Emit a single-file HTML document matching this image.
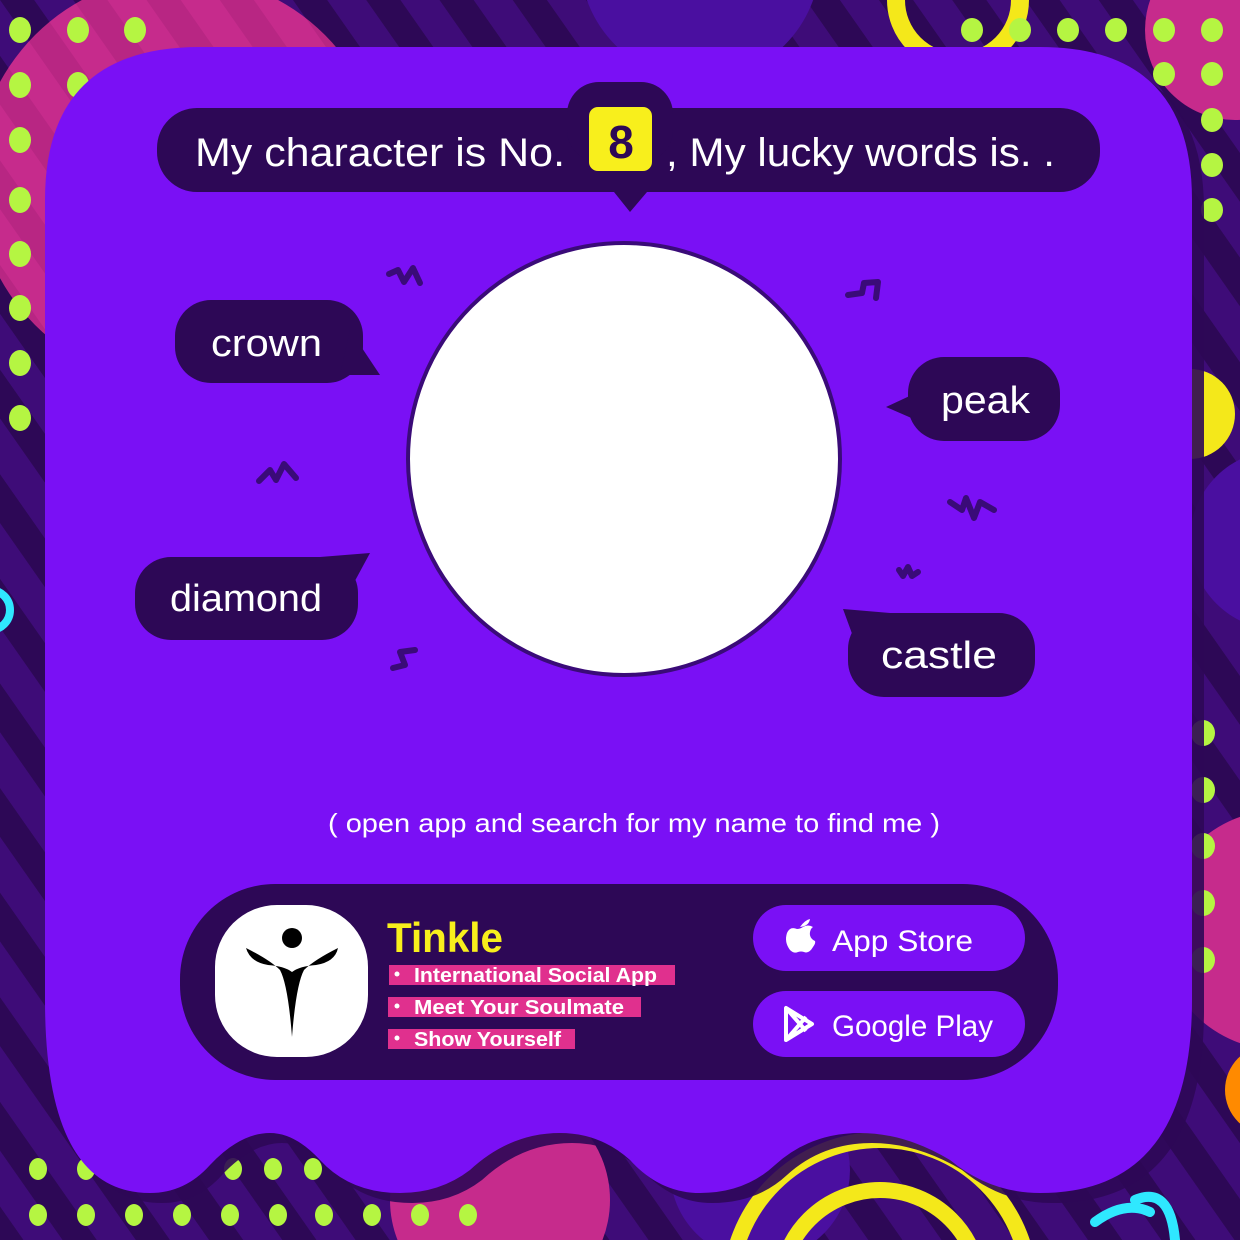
<!DOCTYPE html>
<html><head><meta charset="utf-8"><style>
html,body{margin:0;padding:0;width:1240px;height:1240px;overflow:hidden;background:#3e0c78}
svg{display:block;overflow:hidden}
text{font-family:"Liberation Sans",sans-serif}
</style></head><body>
<svg width="1240" height="1240" viewBox="0 0 1240 1240" xmlns="http://www.w3.org/2000/svg">
<defs>
<pattern id="st" width="60" height="60" patternUnits="userSpaceOnUse" patternTransform="rotate(-35)">
<rect width="60" height="60" fill="#3e0c78"/><rect width="28" height="60" fill="#2d0856"/>
</pattern>
<pattern id="stp" width="60" height="60" patternUnits="userSpaceOnUse" patternTransform="rotate(-35)">
<rect width="60" height="60" fill="#c62b8c"/><rect width="28" height="60" fill="#b82683"/>
</pattern>
</defs>
<rect width="1240" height="1240" fill="url(#st)"/>
<circle cx="700" cy="-40" r="120" fill="#4a0fa0"/>
<circle cx="180" cy="180" r="205" fill="url(#stp)"/>
<circle cx="1235" cy="30" r="90" fill="#c62b8c"/>
<circle cx="1280" cy="930" r="120" fill="#c62b8c"/>
<circle cx="1280" cy="540" r="90" fill="#4a0fa0"/>
<circle cx="1190" cy="414" r="45" fill="#f4e81a"/>
<circle cx="1270" cy="1090" r="45" fill="#ff8a00"/>
<circle cx="958" cy="0" r="62" fill="none" stroke="#f4e81a" stroke-width="18"/>
<circle cx="-10" cy="610" r="20" fill="none" stroke="#2fe8ff" stroke-width="8"/>
<circle cx="500" cy="1200" r="110" fill="#c62b8c"/>
<circle cx="760" cy="1170" r="90" fill="#4a0fa0"/>
<circle cx="880" cy="1290" r="150" fill="none" stroke="#f4e81a" stroke-width="16"/>
<circle cx="880" cy="1290" r="100" fill="none" stroke="#f4e81a" stroke-width="16"/>
<path d="M1095 1222 Q1125 1200 1150 1212" fill="none" stroke="#2fe8ff" stroke-width="10" stroke-linecap="round"/>
<path d="M1135 1200 Q1170 1185 1175 1240" fill="none" stroke="#2fe8ff" stroke-width="10" stroke-linecap="round"/>
<g fill="#b5f542">
<ellipse cx="20" cy="30" rx="11" ry="13"/><ellipse cx="78" cy="30" rx="11" ry="13"/><ellipse cx="135" cy="30" rx="11" ry="13"/>
<ellipse cx="20" cy="85" rx="11" ry="13"/><ellipse cx="78" cy="85" rx="11" ry="13"/>
<ellipse cx="20" cy="140" rx="11" ry="13"/><ellipse cx="20" cy="200" rx="11" ry="13"/><ellipse cx="20" cy="254" rx="11" ry="13"/><ellipse cx="20" cy="308" rx="11" ry="13"/><ellipse cx="20" cy="363" rx="11" ry="13"/><ellipse cx="20" cy="418" rx="11" ry="13"/>
<ellipse cx="972" cy="30" rx="11" ry="12"/><ellipse cx="1020" cy="30" rx="11" ry="12"/><ellipse cx="1068" cy="30" rx="11" ry="12"/><ellipse cx="1116" cy="30" rx="11" ry="12"/><ellipse cx="1164" cy="30" rx="11" ry="12"/><ellipse cx="1212" cy="30" rx="11" ry="12"/>
<ellipse cx="1164" cy="74" rx="11" ry="12"/><ellipse cx="1212" cy="74" rx="11" ry="12"/><ellipse cx="1212" cy="120" rx="11" ry="12"/><ellipse cx="1212" cy="165" rx="11" ry="12"/><ellipse cx="1212" cy="210" rx="11" ry="12"/>
<ellipse cx="1203" cy="733" rx="12" ry="13"/><ellipse cx="1203" cy="790" rx="12" ry="13"/><ellipse cx="1203" cy="846" rx="12" ry="13"/><ellipse cx="1203" cy="903" rx="12" ry="13"/><ellipse cx="1203" cy="960" rx="12" ry="13"/>
<ellipse cx="38" cy="1169" rx="9" ry="11"/><ellipse cx="86" cy="1169" rx="9" ry="11"/><ellipse cx="134" cy="1169" rx="9" ry="11"/><ellipse cx="233" cy="1169" rx="9" ry="11"/><ellipse cx="273" cy="1169" rx="9" ry="11"/><ellipse cx="313" cy="1169" rx="9" ry="11"/><ellipse cx="353" cy="1169" rx="9" ry="11"/>
<ellipse cx="38" cy="1215" rx="9" ry="11"/><ellipse cx="86" cy="1215" rx="9" ry="11"/><ellipse cx="134" cy="1215" rx="9" ry="11"/><ellipse cx="182" cy="1215" rx="9" ry="11"/><ellipse cx="230" cy="1215" rx="9" ry="11"/><ellipse cx="278" cy="1215" rx="9" ry="11"/><ellipse cx="324" cy="1215" rx="9" ry="11"/><ellipse cx="372" cy="1215" rx="9" ry="11"/><ellipse cx="420" cy="1215" rx="9" ry="11"/><ellipse cx="468" cy="1215" rx="9" ry="11"/>
</g>
<path transform="translate(12,10)" fill="#2d0856" opacity="0.9" d="M45 200 Q45 47 200 47 L1040 47 Q1192 47 1192 200 L1192 1000 Q1192 1193 1040 1193 Q990 1193 950 1160 Q905 1133 860 1133 Q810 1133 775 1165 Q745 1193 700 1193 Q660 1193 630 1160 Q600 1133 560 1133 Q510 1133 470 1170 Q440 1193 400 1193 Q350 1193 320 1160 Q295 1133 270 1133 Q240 1133 210 1165 Q185 1193 150 1193 Q45 1193 45 1000Z"/>
<path fill="#7a10f5" d="M45 200 Q45 47 200 47 L1040 47 Q1192 47 1192 200 L1192 1000 Q1192 1193 1040 1193 Q990 1193 950 1160 Q905 1133 860 1133 Q810 1133 775 1165 Q745 1193 700 1193 Q660 1193 630 1160 Q600 1133 560 1133 Q510 1133 470 1170 Q440 1193 400 1193 Q350 1193 320 1160 Q295 1133 270 1133 Q240 1133 210 1165 Q185 1193 150 1193 Q45 1193 45 1000Z"/>
<g fill="#2d0856">
<rect x="157" y="108" width="943" height="84" rx="40"/>
<rect x="567" y="82" width="106" height="80" rx="32"/>
<path d="M614 192 L647 192 L630 212Z"/>
</g>
<rect x="589" y="107" width="63" height="64" rx="9" fill="#f8ef1c"/>
<text x="621" y="158" font-size="46" font-weight="bold" fill="#2d0856" text-anchor="middle">8</text>
<text x="195" y="166" font-size="40" fill="#fff" textLength="370" lengthAdjust="spacingAndGlyphs">My character is No.</text>
<text x="666" y="166" font-size="40" fill="#fff" textLength="389" lengthAdjust="spacingAndGlyphs">, My lucky words is. .</text>
<circle cx="624" cy="459" r="216" fill="#fff" stroke="#3a0b78" stroke-width="4"/>
<g fill="#2d0856">
<rect x="175" y="300" width="188" height="83" rx="36"/><path d="M350 330 L380 375 L340 375Z"/>
<rect x="908" y="357" width="152" height="84" rx="36"/><path d="M916 393 L886 407 L916 420Z"/>
<rect x="135" y="557" width="223" height="83" rx="36"/><path d="M320 557 L370 553 L350 590Z"/>
<rect x="848" y="613" width="187" height="84" rx="36"/><path d="M843 609 L890 613 L858 650Z"/>
</g>
<text x="211" y="356" font-size="38" fill="#fff" textLength="111" lengthAdjust="spacingAndGlyphs">crown</text>
<text x="941" y="413" font-size="38" fill="#fff" textLength="89" lengthAdjust="spacingAndGlyphs">peak</text>
<text x="170" y="611" font-size="38" fill="#fff" textLength="152" lengthAdjust="spacingAndGlyphs">diamond</text>
<text x="881" y="668" font-size="38" fill="#fff" textLength="116" lengthAdjust="spacingAndGlyphs">castle</text>
<g fill="none" stroke="#3a0b78" stroke-width="6" stroke-linejoin="round" stroke-linecap="round">
<path d="M389 274 L398 270 L404 282 L413 268 L420 283"/>
<path d="M848 295 L862 293 L864 283 L878 282 L876 298"/>
<path d="M259 481 L270 470 L276 480 L284 464 L296 478"/>
<path d="M950 502 L962 510 L966 498 L974 518 L980 502 L994 510"/>
<path d="M899 570 L903 576 L908 567 L912 576 L918 572"/>
<path d="M393 668 L405 665 L400 652 L415 650"/>
</g>
<text x="328" y="832" font-size="26" fill="#fff" textLength="612" lengthAdjust="spacingAndGlyphs">( open app and search for my name to find me )</text>
<rect x="180" y="884" width="878" height="196" rx="95" fill="#2d0856"/>
<rect x="215" y="905" width="153" height="152" rx="62" fill="#fff"/>
<circle cx="292" cy="938" r="10" fill="#000"/>
<path d="M246 948 Q270 960 280 970 Q288 985 292 1037 Q296 985 304 970 Q314 960 338 948 Q335 962 316 965 Q300 966 292 972 Q284 966 268 965 Q250 962 246 948Z" fill="#000"/>
<text x="387" y="952" font-size="42" font-weight="bold" fill="#f8ef1c" textLength="116" lengthAdjust="spacingAndGlyphs">Tinkle</text>
<rect x="389" y="965" width="286" height="20" fill="#e0308e"/>
<rect x="388" y="997" width="253" height="20" fill="#e0308e"/>
<rect x="388" y="1029" width="187" height="20" fill="#e0308e"/>
<g fill="#fff" font-size="20" font-weight="bold">
<circle cx="397" cy="974" r="2.5"/><circle cx="397" cy="1006" r="2.5"/><circle cx="397" cy="1038" r="2.5"/>
<text x="414" y="982" textLength="243" lengthAdjust="spacingAndGlyphs">International Social App</text>
<text x="414" y="1014" textLength="210" lengthAdjust="spacingAndGlyphs">Meet Your Soulmate</text>
<text x="414" y="1046" textLength="147" lengthAdjust="spacingAndGlyphs">Show Yourself</text>
</g>
<rect x="753" y="905" width="272" height="66" rx="33" fill="#7a10f5"/>
<rect x="753" y="991" width="272" height="66" rx="33" fill="#7a10f5"/>
<path d="M800 927 Q805 920 810 919 Q809 926 800 927Z M797 929 Q790 926 787 933 Q784 942 790 950 Q794 954 798 952 Q801 951 804 952 Q809 954 813 947 Q816 943 815 941 Q809 938 810 932 Q811 928 813 927 Q808 924 803 927 Q800 929 797 929Z" fill="#fff"/>
<text x="832" y="951" font-size="30" fill="#fff" textLength="141" lengthAdjust="spacingAndGlyphs">App Store</text>
<path d="M786 1008 L786 1040 L812 1024Z M786 1008 L806 1031 M786 1040 L806 1017" fill="none" stroke="#fff" stroke-width="4" stroke-linejoin="round"/>
<text x="832" y="1036" font-size="30" fill="#fff" textLength="161" lengthAdjust="spacingAndGlyphs">Google Play</text>
</svg>
</body></html>
